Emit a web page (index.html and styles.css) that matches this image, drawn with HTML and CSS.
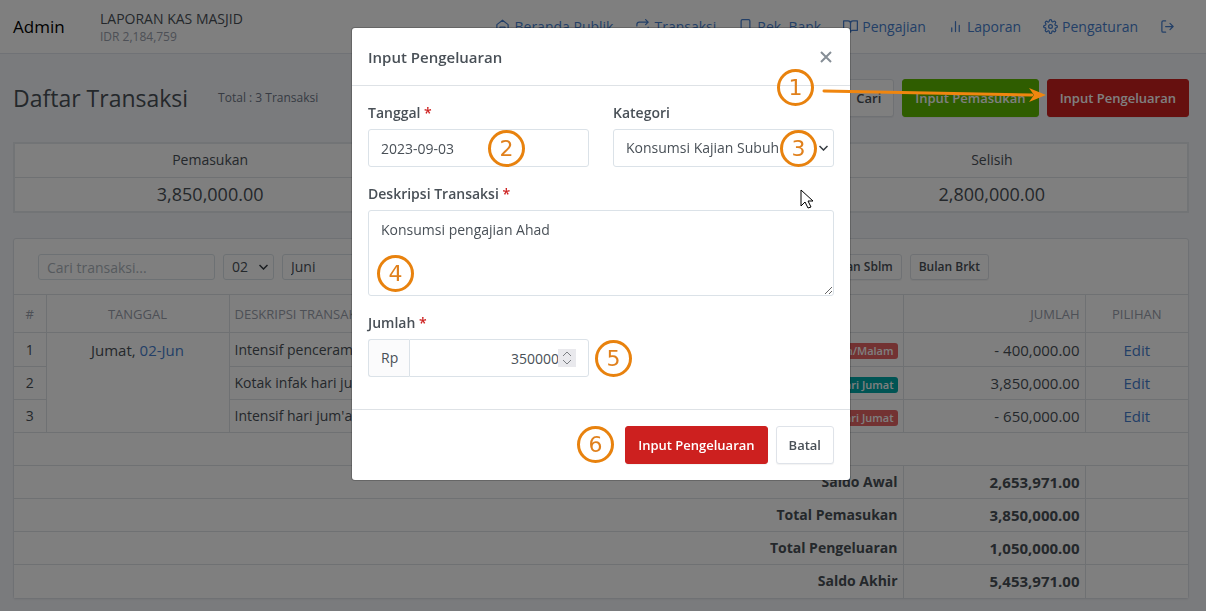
FILE: index.html
```html
<!DOCTYPE html>
<html lang="id">
<head>
<meta charset="utf-8">
<meta name="viewport" content="width=device-width, initial-scale=1">
<title>Daftar Transaksi</title>
<link rel="stylesheet" href="styles.css">
</head>
<body>
<header class="topbar">
  <a class="brand" href="#">Admin</a>
  <div class="org">
    <div class="org-name">LAPORAN KAS MASJID</div>
    <div class="org-balance">IDR 2,184,759</div>
  </div>
  <nav class="nav">
    <a href="#"><svg class="icon" viewBox="0 0 24 24"><path d="M3 9 12 2l9 7v11a2 2 0 0 1-2 2H5a2 2 0 0 1-2-2zM8 22v-9h8v9"/></svg>Beranda Publik</a>
    <a href="#"><svg class="icon" viewBox="0 0 24 24"><path d="m17 1 4 4-4 4M3 11V9a4 4 0 0 1 4-4h14M7 23l-4-4 4-4M21 13v2a4 4 0 0 1-4 4H3"/></svg>Transaksi</a>
    <a href="#"><svg class="icon" viewBox="0 0 24 24"><path d="M19 21l-7-5-7 5V3a2 2 0 0 1 2-2h10a2 2 0 0 1 2 2z"/></svg>Rek. Bank</a>
    <a href="#"><svg class="icon" viewBox="0 0 24 24"><path d="M1 3h7a4 4 0 0 1 4 4v14a3 3 0 0 0-3-3H1zM23 3h-7a4 4 0 0 0-4 4v14a3 3 0 0 1 3-3h8z"/></svg>Pengajian</a>
    <a href="#"><svg class="icon" viewBox="0 0 24 24"><path d="M18 20V10M12 20V4M6 20v-6"/></svg>Laporan</a>
    <a href="#"><svg class="icon" viewBox="0 0 24 24"><circle cx="12" cy="12" r="3"/><path d="M19.4 15a1.65 1.65 0 0 0 .33 1.82l.06.06a2 2 0 0 1-2.83 2.83l-.06-.06a1.65 1.65 0 0 0-2.8 1.17V21a2 2 0 0 1-4 0v-.09A1.65 1.65 0 0 0 7.1 19.65l-.06.06a2 2 0 0 1-2.83-2.83l.06-.06A1.65 1.65 0 0 0 3.1 14H3a2 2 0 0 1 0-4h.09A1.65 1.65 0 0 0 4.27 7.18l-.06-.06a2 2 0 0 1 2.83-2.83l.06.06A1.65 1.65 0 0 0 10 3.1V3a2 2 0 0 1 4 0v.09a1.65 1.65 0 0 0 2.8 1.17l.06-.06a2 2 0 0 1 2.83 2.83l-.06.06A1.65 1.65 0 0 0 20.9 10H21a2 2 0 0 1 0 4h-.09a1.65 1.65 0 0 0-1.51 1z"/></svg>Pengaturan</a>
    <a href="#" aria-label="Keluar"><svg class="icon" viewBox="0 0 24 24"><path d="M9 21H5a2 2 0 0 1-2-2V5a2 2 0 0 1 2-2h4M16 17l5-5-5-5M21 12H9"/></svg></a>
  </nav>
</header>

<main class="page">
  <div class="page-head">
    <h1>Daftar Transaksi</h1>
    <span class="subtitle">Total : 3 Transaksi</span>
    <div class="actions">
      <button class="btn" type="button">Cari</button>
      <button class="btn btn-income" type="button">Input Pemasukan</button>
      <button class="btn btn-danger" type="button">Input Pengeluaran</button>
    </div>
  </div>

  <table class="summary">
    <thead><tr><th>Pemasukan</th><th>Pengeluaran</th><th>Selisih</th></tr></thead>
    <tbody><tr><td>3,850,000.00</td><td>1,050,000.00</td><td>2,800,000.00</td></tr></tbody>
  </table>

  <section class="card">
    <form class="filters">
      <input class="control small search" type="text" placeholder="Cari transaksi..." aria-label="Cari transaksi">
      <select class="control small select day" aria-label="Tanggal"><option>02</option></select>
      <select class="control small select month" aria-label="Bulan"><option>Juni</option></select>
      <select class="control small select other" aria-label="Tahun"><option>2023</option></select>
      <button class="btn btn-small" type="button">Bulan Sblm</button>
      <button class="btn btn-small" type="button">Bulan Brkt</button>
    </form>
    <table class="ledger">
      <colgroup><col class="c-no"><col class="c-date"><col><col class="c-amount"><col class="c-action"></colgroup>
      <thead>
        <tr><th class="center">#</th><th class="center">TANGGAL</th><th class="left">DESKRIPSI TRANSAKSI</th><th class="right">JUMLAH</th><th class="center">PILIHAN</th></tr>
      </thead>
      <tbody>
        <tr><td class="center">1</td><td class="center date" rowspan="3">Jumat, <a href="#">02-Jun</a></td><td><div class="desc">Intensif penceramah<span class="badge out">Kajian Subuh/Malam</span></div></td><td class="right money">- 400,000.00</td><td class="center money"><a href="#">Edit</a></td></tr>
        <tr><td class="center">2</td><td><div class="desc">Kotak infak hari jum'at<span class="badge in">Infak Hari Jumat</span></div></td><td class="right money">3,850,000.00</td><td class="center money"><a href="#">Edit</a></td></tr>
        <tr><td class="center">3</td><td><div class="desc">Intensif hari jum'at<span class="badge out">Hari Jumat</span></div></td><td class="right money">- 650,000.00</td><td class="center money"><a href="#">Edit</a></td></tr>
        <tr><td colspan="5">&nbsp;</td></tr>
      </tbody>
      <tfoot>
        <tr><th class="right" colspan="3" scope="row">Saldo Awal</th><td class="right money">2,653,971.00</td><td></td></tr>
        <tr><th class="right" colspan="3" scope="row">Total Pemasukan</th><td class="right money">3,850,000.00</td><td></td></tr>
        <tr><th class="right" colspan="3" scope="row">Total Pengeluaran</th><td class="right money">1,050,000.00</td><td></td></tr>
        <tr><th class="right" colspan="3" scope="row">Saldo Akhir</th><td class="right money">5,453,971.00</td><td></td></tr>
      </tfoot>
    </table>
  </section>
</main>

<div class="backdrop">
  <div class="modal" role="dialog" aria-modal="true" aria-labelledby="modal-title">
    <div class="modal-head">
      <h2 id="modal-title">Input Pengeluaran</h2>
      <button class="close" type="button" aria-label="Tutup"><svg viewBox="0 0 10 10"><path d="m0 0 10 10M10 0 0 10"/></svg></button>
    </div>
    <form id="expense" class="modal-body">
      <div class="field">
        <label for="date">Tanggal <span class="required">*</span></label>
        <input class="control" id="date" type="text" value="2023-09-03">
      </div>
      <div class="field">
        <label for="category">Kategori</label>
        <select class="control select" id="category"><option>Konsumsi Kajian Subuh</option></select>
      </div>
      <div class="field wide">
        <label for="description">Deskripsi Transaksi <span class="required">*</span></label>
        <textarea class="control" id="description">Konsumsi pengajian Ahad</textarea>
      </div>
      <div class="field">
        <label for="amount">Jumlah <span class="required">*</span></label>
        <div class="group">
          <span class="prefix">Rp</span>
          <input class="control amount" id="amount" type="number" value="350000">
          <svg class="spinner" viewBox="0 0 18 18" aria-hidden="true"><path d="m5 7 4-4 4 4M5 11l4 4 4-4"/></svg>
        </div>
      </div>
    </form>
    <div class="modal-foot">
      <button class="btn btn-danger" type="submit" form="expense">Input Pengeluaran</button>
      <button class="btn" type="button">Batal</button>
    </div>

    <svg class="arrow" viewBox="0 0 226 20" aria-hidden="true"><path class="shaft" d="m3 7 208 4"/><path class="tip" d="m225 11-17 7 5-7-5-7z"/></svg>
    <span class="step step-1">1</span>
    <span class="step step-2">2</span>
    <span class="step step-3">3</span>
    <span class="step step-4">4</span>
    <span class="step step-5">5</span>
    <span class="step step-6">6</span>
    <svg class="pointer" viewBox="0 0 14 21" aria-hidden="true"><path d="M1 1v16l4-4 3 6 3-1-3-6h5z"/></svg>
  </div>
</div>
</body>
</html>
```
FILE: styles.css
```css
* { box-sizing: border-box; }

body {
  margin: 0;
  min-height: 100vh;
  background: #f5f7fb;
  color: #495057;
  font: 14px/22px "Trebuchet MS", "Open Sans", "Noto Sans", sans-serif;
}

a { color: #467fcf; text-decoration: none; }
h1, h2 { margin: 0; font-weight: 400; }
button, input, select, textarea { font: inherit; color: inherit; }

.topbar {
  display: flex;
  align-items: center;
  height: 54px;
  padding: 0 31px 0 13px;
  background: #fff;
  border-bottom: 1px solid #e0e5ec;
}
.brand { width: 87px; color: #000; font-size: 17px; }
.org-name { line-height: 20px; }
.org-balance { color: #9aa0ac; font-size: 12px; line-height: 16px; }
.nav { display: flex; gap: 22px; margin-left: auto; }
.nav a { display: flex; align-items: center; gap: 4px; }
.icon {
  width: 15px;
  height: 15px;
  fill: none;
  stroke: currentColor;
  stroke-width: 2;
  stroke-linecap: round;
  stroke-linejoin: round;
}

.page { padding: 25px 17px 12px 13px; }
.page-head { display: flex; align-items: center; margin-bottom: 25px; }
.page-head h1 { font-size: 23px; line-height: 32px; }
.subtitle { margin-left: 30px; color: #6e7687; font-size: 12px; }
.actions { display: flex; gap: 8px; margin-left: auto; }

.btn {
  height: 38px;
  padding: 0 12px;
  background: #fff;
  border: 1px solid #dfe3e9;
  border-radius: 3px;
  box-shadow: 0 1px 1px rgba(0, 0, 0, .05);
  font-size: 13px;
  font-weight: 600;
  white-space: nowrap;
}
.btn-income { background: #5eba00; border-color: #5eba00; color: #fff; }
.btn-danger { background: #cd201f; border-color: #cd201f; color: #fff; }
.btn-small { height: 26px; padding: 0 8px; font-size: 12px; }

table { width: 100%; border-collapse: collapse; table-layout: fixed; background: #fff; }
.summary { margin-bottom: 25px; text-align: center; border: 2px solid #e4e8ed; }
.summary th { height: 34px; padding: 0; font-weight: 400; border-bottom: 1px solid #dee2e6; }
.summary td { height: 35px; padding: 0; font-size: 18px; }

.card { background: #fff; border: 1px solid #dfe3e9; border-radius: 3px; box-shadow: 0 1px 2px rgba(0, 0, 0, .05); }
.filters { display: flex; gap: 8px; max-width: 975px; padding: 15px 0 14px 24px; }
.control {
  width: 100%;
  height: 38px;
  padding: 0 12px;
  background-color: #fff;
  border: 1px solid #dbe2e8;
  border-radius: 3px;
}
.control::placeholder { color: #adb5bd; opacity: 1; }
.small { height: 26px; padding: 0 8px; }
.search { width: 177px; }
.day { width: 51px; }
.month { width: 100px; }
.other { flex: 1; }
.select {
  appearance: none;
  background-image: url("data:image/svg+xml,%3Csvg xmlns='http://www.w3.org/2000/svg' width='9' height='6'%3E%3Cpath d='M.5 1l4 4 4-4' fill='none' stroke='%23343a40' stroke-width='1.5'/%3E%3C/svg%3E");
  background-repeat: no-repeat;
  background-position: right 5px center;
}

.ledger th, .ledger td { height: 33px; padding: 0 5px; border: 1px solid #dee2e6; }
.ledger tr > :first-child { border-left: 0; }
.ledger tr > :last-child { border-right: 0; }
.ledger tfoot tr:last-child > * { border-bottom: 0; }
.ledger thead th { height: 38px; color: #9aa0ac; font-size: 13px; font-weight: 400; }
.ledger tbody tr:first-child td { height: 34px; }
.ledger tfoot th { font-weight: 700; }
.ledger tfoot td { font-weight: 700; }
.ledger .date { padding-top: 6px; font-size: 15px; vertical-align: top; }
.ledger .money { font-size: 15px; }
.c-no { width: 32px; }
.c-date { width: 183px; }
.c-amount { width: 182px; }
.c-action { width: 103px; }
.left { text-align: left; }
.center { text-align: center; }
.right { text-align: right; }
.desc { display: flex; align-items: center; justify-content: space-between; }
.badge { margin-top: 3px; padding: 0 4px; border-radius: 3px; color: #fff; font-size: 11px; font-weight: 600; line-height: 16px; }
.badge.out { background: #e66465; }
.badge.in { background: #00a8a8; }

.backdrop {
  position: fixed;
  inset: 0;
  display: flex;
  align-items: flex-start;
  justify-content: center;
  padding: 28px 17px 28px 13px;
  background: rgba(0, 0, 0, .5);
}
.modal {
  position: relative;
  width: 100%;
  max-width: 498px;
  background: #fff;
  border-radius: 3px;
  box-shadow: 0 0 0 1px rgba(0, 0, 0, .2);
}
.modal-head {
  display: flex;
  align-items: center;
  justify-content: space-between;
  height: 58px;
  padding: 0 16px;
  border-bottom: 1px solid #dee2e6;
}
.modal-head h2 { font-size: 15px; font-weight: 600; }
.close { display: flex; padding: 3px; background: none; border: 0; }
.close svg { width: 10px; height: 10px; fill: none; stroke: #868e96; stroke-width: 2; overflow: visible; }
.modal-body { display: grid; grid-template-columns: 1fr 1fr; gap: 16px 24px; padding: 16px 16px 32px; }
.wide { grid-column: 1 / -1; }
.field label { display: block; margin-bottom: 5px; font-weight: 600; }
.required { color: #cd201f; }
textarea.control { display: block; height: 86px; padding: 8px 12px; resize: vertical; }
.group { position: relative; display: flex; }
.prefix {
  padding: 7px 11px 0 12px;
  border: 1px solid #dbe2e8;
  border-right: 0;
  border-radius: 3px 0 0 3px;
  background: #fbfbfc;
}
.amount { flex: 1; min-width: 0; padding-right: 29px; border-radius: 0 3px 3px 0; text-align: right; appearance: textfield; }
.amount::-webkit-inner-spin-button { appearance: none; margin: 0; }
.spinner {
  position: absolute;
  top: 10px;
  right: 13px;
  width: 18px;
  height: 18px;
  background: #e9e9ed;
  fill: none;
  stroke: #7c7f83;
}
.modal-foot {
  display: flex;
  justify-content: flex-end;
  gap: 8px;
  padding: 16px;
  border-top: 1px solid #dee2e6;
}

.step {
  position: absolute;
  display: flex;
  align-items: center;
  justify-content: center;
  width: 37px;
  height: 37px;
  border: 3px solid #e8820e;
  border-radius: 50%;
  color: #e0801c;
  font: 22px/22px "DejaVu Sans", sans-serif;
}
.step-1 { left: 425px; top: 41px; }
.step-2 { left: 136px; top: 102px; }
.step-3 { left: 428px; top: 102px; }
.step-4 { left: 25px; top: 227px; }
.step-5 { left: 243px; top: 312px; }
.step-6 { left: 225px; top: 398px; }
.arrow { position: absolute; left: 469px; top: 56px; width: 226px; height: 20px; }
.shaft { fill: none; stroke: #f0860f; stroke-width: 3; stroke-linecap: round; }
.tip { fill: #f0860f; }
.pointer { position: absolute; left: 448px; top: 161px; width: 14px; height: 21px; fill: #fff; stroke: #000; stroke-width: 1; }
```
